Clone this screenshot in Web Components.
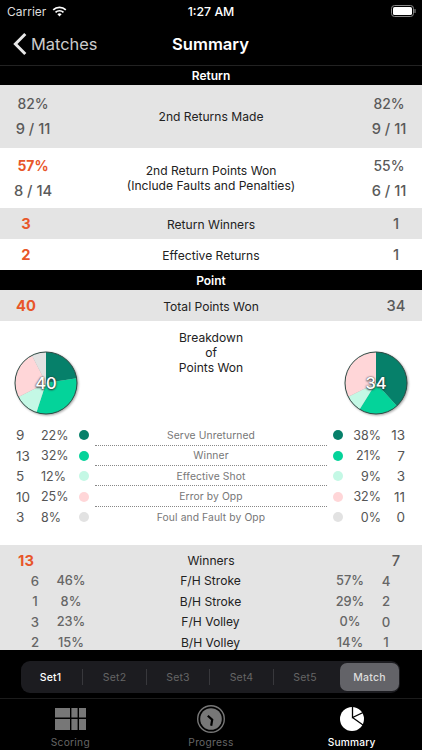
<!DOCTYPE html>
<html><head><meta charset="utf-8"><style>
html,body{margin:0;padding:0;background:#000;}
body{width:422px;height:750px;overflow:hidden;font-family:Inter,"Liberation Sans",sans-serif;}
app-shell{display:flex;}
</style></head><body>
<app-shell>
  <status-bar slot="top"></status-bar>
  <nav-bar slot="top" back="Matches" heading="Summary"></nav-bar>
  <section-head slot="body" style="height:19.3px">Return</section-head>
  <stat-double slot="body" tone="gray" a="82%" b="9 / 11" c="82%" d="9 / 11">2nd Returns Made</stat-double>
  <stat-double slot="body" h="60" win="l" a="57%" b="8 / 14" c="55%" d="6 / 11">2nd Return Points Won<br>(Include Faults and Penalties)</stat-double>
  <stat-single slot="body" tone="gray" win="l" a="3" c="1">Return Winners</stat-single>
  <stat-single slot="body" win="l" a="2" c="1">Effective Returns</stat-single>
  <section-head slot="body">Point</section-head>
  <stat-single slot="body" tone="gray" win="l" a="40" c="34">Total Points Won</stat-single>
  <break-down slot="body"></break-down>
  <winner-block slot="body"></winner-block>
  <set-picker slot="bottom"></set-picker>
  <tab-bar slot="bottom"></tab-bar>
</app-shell>
<script>
function def(name, css, html, init){
  customElements.define(name, class extends HTMLElement{
    connectedCallback(){
      if(this.shadowRoot) return;
      const r=this.attachShadow({mode:'open'});
      const g=k=>this.getAttribute(k)||'';
      r.innerHTML='<style>'+css+'</style>'+(typeof html==='function'?html(g,this):html);
      if(init) init(r,g,this);
    }
  });
}
def('app-shell',`:host{display:flex;flex-direction:column;width:422px;height:750px;background:#000;overflow:hidden}
 .top{flex:none}.body{flex:1;min-height:0;overflow:hidden;display:flex;flex-direction:column}.bottom{flex:none;height:100px}
 ::slotted(*){flex:none}`,
 `<div class="top"><slot name="top"></slot></div><div class="body"><slot name="body"></slot></div><div class="bottom"><slot name="bottom"></slot></div>`);

def('status-bar',`:host{display:flex;height:22px;align-items:center;justify-content:space-between;color:#fff;font-size:12px;padding:0 6px 0 7px;box-sizing:border-box}
 .l{display:flex;align-items:center;gap:6px;color:#ddd;width:120px}.c{font-weight:500;font-size:12.3px;margin-left:-1px}.r{width:120px;display:flex;justify-content:flex-end}svg{display:block}`,
 `<div class="l"><span>Carrier</span><svg width="15" height="11" viewBox="0 0 15 11"><path d="M7.5 10.6 5.4 8.3a3 3 0 0 1 4.2 0Z" fill="#fff"/><path d="M3.5 6.4a5.7 5.7 0 0 1 8 0M1.2 3.9a9 9 0 0 1 12.6 0" fill="none" stroke="#fff" stroke-width="1.7"/></svg></div>
 <div class="c">1:27 AM</div>
 <div class="r"><svg width="25" height="12" viewBox="0 0 25 12"><rect x=".5" y=".5" width="22" height="11" rx="3" fill="none" stroke="#888"/><rect x="2" y="2" width="19" height="8" rx="1.6" fill="#fff"/><rect x="23.4" y="4" width="1.2" height="4" rx=".6" fill="#888"/></svg></div>`);

def('nav-bar',`:host{display:flex;height:43px;align-items:center;justify-content:center;color:#fff;border-bottom:.7px solid #222;position:relative}
 .b{position:absolute;left:13px;top:0;height:100%;display:flex;align-items:center;gap:4px;font-size:16.4px;color:#ccc}
 .t{font-size:16.6px;font-weight:600;margin-right:1px}svg{display:block}`,
 (g)=>`<div class="b"><svg width="14" height="24" viewBox="0 0 14 24"><path d="M12.3 2 2.4 12 12.3 22" fill="none" stroke="#e8e8e8" stroke-width="3"/></svg><span>${g('back')}</span></div><div class="t">${g('heading')}</div>`);

def('section-head',`:host{display:flex;height:20px;align-items:center;justify-content:center;background:#000;color:#fff;font-size:12px;font-weight:600}`,`<slot></slot>`);

const numCss=`.n{font-size:14.7px;font-weight:500;color:#5a5a5a;text-align:center}.p{font-size:13.9px}.w{color:#e8562a;font-weight:700}`;
const cls=(v,w)=>'n'+(v.endsWith('%')?' p':'')+(w?' w':'');
def('stat-double',`:host{display:grid;grid-template-columns:66px 1fr 66px;align-items:center;height:63px;padding-top:1.4px;box-sizing:border-box;background:#fff;color:#222}
 :host([tone=gray]){background:#e4e4e4}:host([h="60"]){height:60px}
 .col{display:flex;flex-direction:column;gap:8px}.n{line-height:17px}
 .m{text-align:center;font-size:12.1px;line-height:14.5px}`+numCss,
 (g)=>`<div class="col"><div class="${cls(g('a'),g('win')=='l')}">${g('a')}</div><div class="n">${g('b')}</div></div><div class="m"><slot></slot></div><div class="col"><div class="${cls(g('c'))}">${g('c')}</div><div class="n">${g('d')}</div></div>`);

def('stat-single',`:host{display:grid;grid-template-columns:52px 1fr 52px;align-items:center;height:31px;padding-top:.6px;box-sizing:border-box;background:#fff;color:#222}
 :host([tone=gray]){background:#e4e4e4}.m{text-align:center;font-size:12.1px}`+numCss,
 (g)=>`<div class="n ${g('win')=='l'?'w':''}">${g('a')}</div><div class="m"><slot></slot></div><div class="n">${g('c')}</div>`);

def('pie-chart',`:host{display:grid;width:64px;height:64px;place-items:center}
 svg,.v{grid-area:1/1}svg{overflow:visible;filter:drop-shadow(1px 1.5px 1px rgba(0,0,0,.35))}
 .v{z-index:1;color:#fff;font-size:16.5px;font-weight:500;text-shadow:0 0 2px #333,0 1px 2px #333}`,
 (g)=>{
  const vals=g('vals').split(',').map(Number),cols=['#06806a','#04d39a','#c4f8e5','#ffd6d8','#e2e2e2'];
  const tot=vals.reduce((a,b)=>a+b,0);let s=0,p='';const R=31,c=32;
  vals.forEach((v,i)=>{if(!v)return;const a0=s/tot*2*Math.PI;s+=v;const a1=s/tot*2*Math.PI;
    const pt=a=>(c+R*Math.sin(a)).toFixed(2)+' '+(c-R*Math.cos(a)).toFixed(2);
    p+=`<path d="M${c} ${c}L${pt(a0)}A${R} ${R} 0 ${a1-a0>Math.PI?1:0} 1 ${pt(a1)}Z" fill="${cols[i]}"/>`;});
  return `<svg width="64" height="64" viewBox="0 0 64 64">${p}<circle cx="${c}" cy="${c}" r="${R}" fill="none" stroke="#2f4a44" stroke-width="1"/></svg><div class="v">${g('total')}</div>`;
 });

def('break-row',`:host{display:grid;grid-template-columns:25px 38px 10px 1fr 10px 38px 24px;height:20.4px;padding-left:16px;padding-right:17px;align-items:center;color:#555;font-size:13.5px;box-sizing:border-box}
 .d{width:10px;height:10px;border-radius:50%;background:var(--c)}
 .r{text-align:right}.p{font-size:12.5px}
 .m{height:100%;margin:0 6px;display:flex;align-items:center;justify-content:center;font-size:10.3px;color:#777;letter-spacing:.1px;border-bottom:1px dotted #888;box-sizing:border-box}
 :host([last]) .m{border-bottom:0}`,
 (g,el)=>`<span>${g('a')}</span><span class="p">${g('b')}</span><span class="d" style="--c:${g('col')}"></span><div class="m"><slot></slot></div><span class="d" style="--c:${g('col')}"></span><span class="r p">${g('c')}</span><span class="r">${g('e')}</span>`);

def('break-down',`:host{display:block;height:224px;background:#fff;box-sizing:border-box;padding-top:10px}
 .top{display:flex;justify-content:space-between;padding:0 14px;height:94px}
 .ti{text-align:center;font-size:12.1px;line-height:14.7px;color:#222}
 pie-chart{margin-top:20px}`,
 `<div class="top"><pie-chart vals="9,13,5,10,3" total="40"></pie-chart><div class="ti">Breakdown<br>of<br>Points Won</div><pie-chart vals="13,7,3,11" total="34"></pie-chart></div>
 <break-row a="9" b="22%" c="38%" e="13" col="#06806a">Serve Unreturned</break-row>
 <break-row a="13" b="32%" c="21%" e="7" col="#04d39a">Winner</break-row>
 <break-row a="5" b="12%" c="9%" e="3" col="#c4f8e5">Effective Shot</break-row>
 <break-row a="10" b="25%" c="32%" e="11" col="#ffd6d8">Error by Opp</break-row>
 <break-row last a="3" b="8%" c="0%" e="0" col="#e2e2e2">Foul and Fault by Opp</break-row>`);

def('winner-row',`:host{display:grid;grid-template-columns:18px 54px 1fr 54px 18px;height:20.4px;align-items:center;padding:0 27px 0 26px;color:#666;font-size:13.2px;font-weight:500;text-align:center}
 .p{font-size:12.8px}.m{font-size:12.1px;color:#222;font-weight:400}`,
 (g)=>`<span>${g('a')}</span><span class="p">${g('b')}</span><div class="m"><slot></slot></div><span class="p">${g('c')}</span><span>${g('e')}</span>`);

def('winner-block',`:host{display:block;background:#e4e4e4;padding-top:5px;height:105px;box-sizing:border-box;overflow:hidden}`,
 `<stat-single tone="gray" win="l" a="13" c="7" style="height:20.4px">Winners</stat-single>
 <winner-row a="6" b="46%" c="57%" e="4">F/H Stroke</winner-row>
 <winner-row a="1" b="8%" c="29%" e="2">B/H Stroke</winner-row>
 <winner-row a="3" b="23%" c="0%" e="0">F/H Volley</winner-row>
 <winner-row a="2" b="15%" c="14%" e="1">B/H Volley</winner-row>`);

def('set-picker',`:host{display:block;height:49px;box-sizing:border-box;padding:11px 22px 6px 21px;border-bottom:.7px solid #1c1c1c}
 .s{display:grid;grid-template-columns:62px 64px 63px 64px 65px 1fr;height:32px;background:#1c1c20;border-radius:9px;box-sizing:border-box;align-items:center;text-align:center;font-size:10.5px;letter-spacing:.2px;color:#666}
 .s span{display:flex;align-items:center;justify-content:center;height:16px;border-right:1px solid #38383c}
 .s span:first-child{padding-right:2px}
 .s span:nth-child(5){border-right:0;padding-right:3px}
 .s .on{color:#fff;font-weight:500}
 .s .sel{height:28.5px;margin:0 1px;background:#636368;border-radius:7px;color:#ddd;border:0;font-weight:500}`,
 `<div class="s"><span class="on">Set1</span><span>Set2</span><span>Set3</span><span>Set4</span><span>Set5</span><span class="sel">Match</span></div>`);

def('tab-bar',`:host{display:grid;grid-template-columns:1fr 1fr 1fr;height:51px;font-size:10.2px;color:#666;letter-spacing:.3px;text-align:center}
 div{display:flex;flex-direction:column;align-items:center;padding-top:8.5px;gap:6px;line-height:12px}
 svg{display:block}.on{color:#fff;font-weight:500;letter-spacing:.15px}`,
 `<div><svg width="31" height="22" viewBox="0 0 31 22"><path d="M0 0h15v9.6H0zM16.4 0h6.2v9.6h-6.2zM24 0H31v9.6h-7zM0 11h15v11H0zM16.4 11h6.2v11h-6.2zM24 11H31v11h-7z" fill="#777"/></svg><span>Scoring</span></div>
 <div><svg width="28" height="28" viewBox="0 0 28 28" style="margin-top:-3px;margin-bottom:-3px"><circle cx="14" cy="14" r="13.3" fill="none" stroke="#777" stroke-width="1.4"/><circle cx="14" cy="14" r="10.8" fill="#777"/><path d="M10.8 10.7 15.2 14.7 14.2 20.7" fill="none" stroke="#000" stroke-width="2.2"/></svg><span>Progress</span></div>
 <div><svg width="24" height="24" viewBox="0 0 24 24" style="margin-top:-1px;margin-bottom:-1px"><circle cx="12" cy="12" r="12" fill="#fff"/><path d="M12.5 0V10.5L24 5M12.5 10.5 23 18" fill="none" stroke="#000" stroke-width="1.3"/></svg><span class="on">Summary</span></div>`);
</script>
</body></html>
